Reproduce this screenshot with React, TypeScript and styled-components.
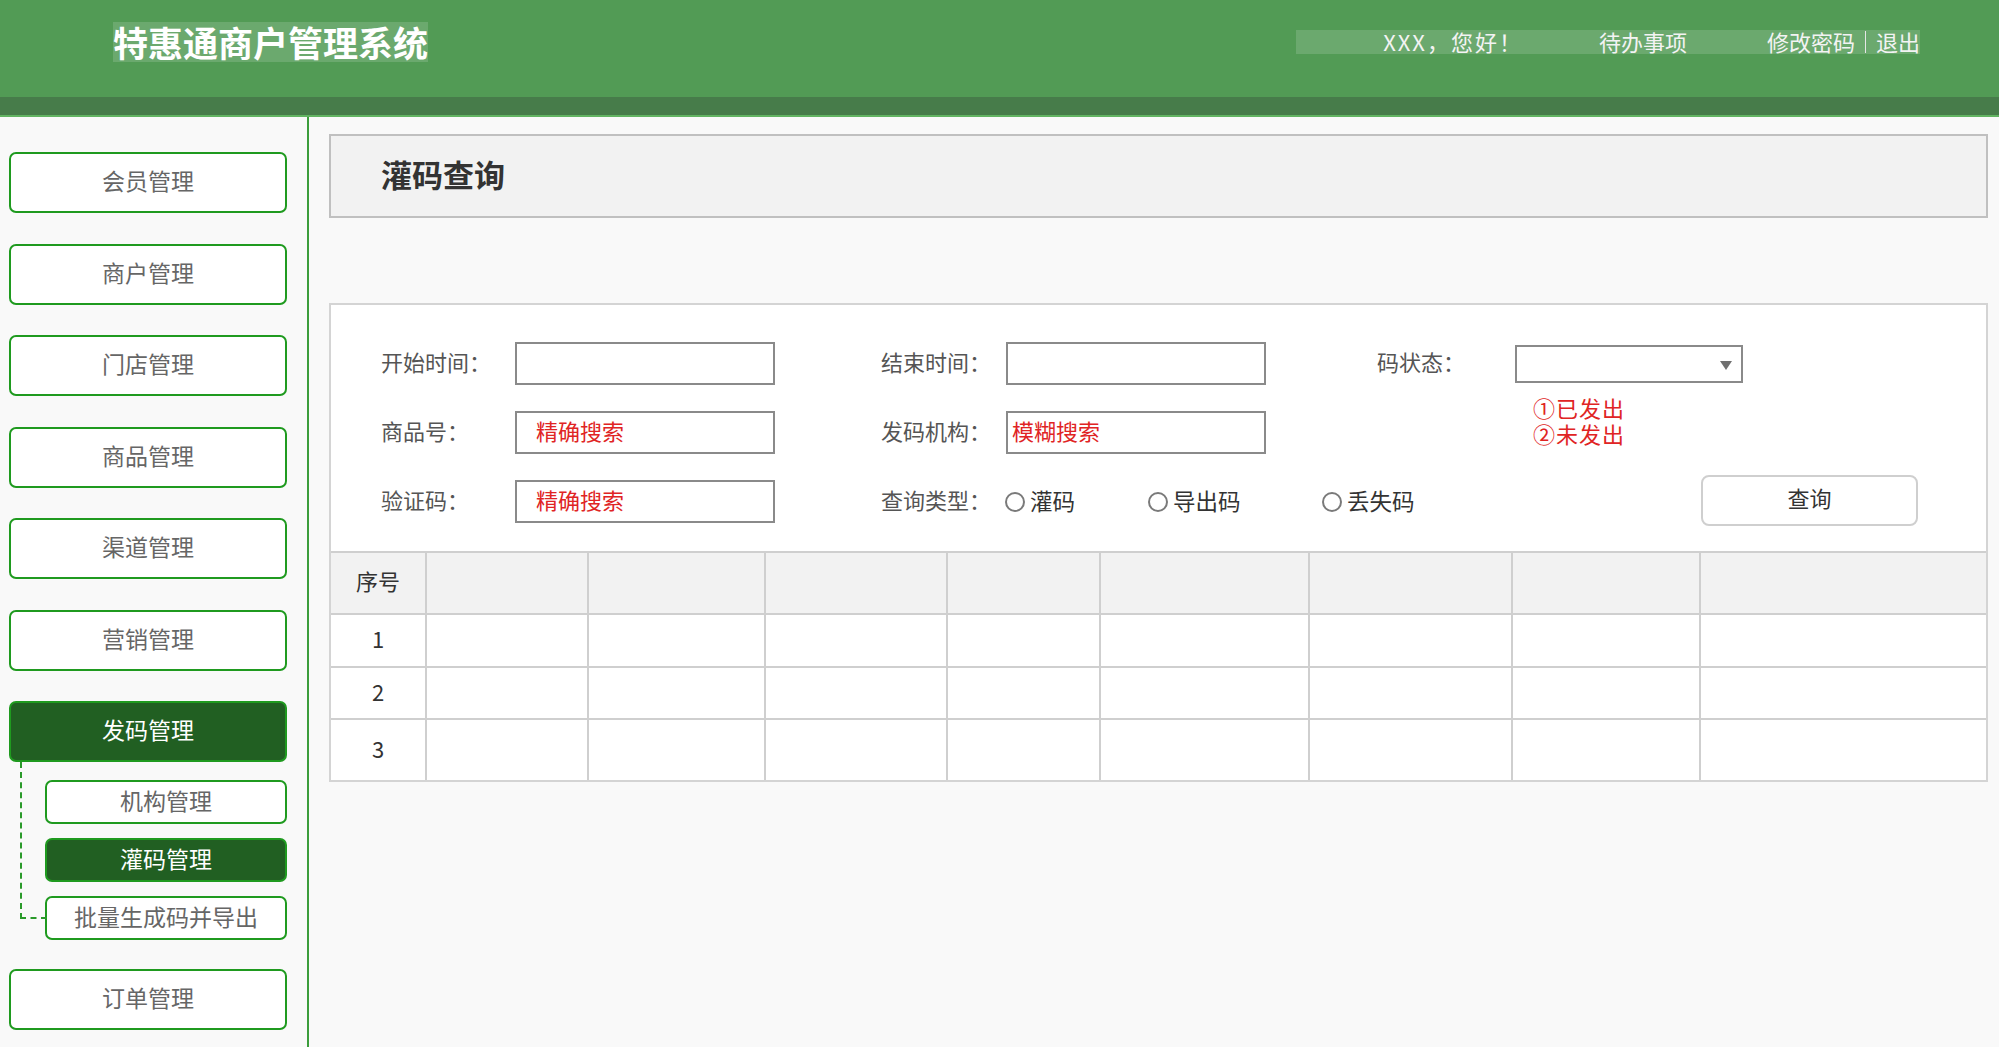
import React from "react";
import styled, { createGlobalStyle } from "styled-components";

const GlobalStyle = createGlobalStyle`
    html, body {
        margin: 0;
        padding: 0;
    }
    body {
        font-family: "Noto Sans CJK SC", "Noto Sans", sans-serif;
        background: #f9f9f9;
    }
    * {
        box-sizing: border-box;
    }
`;

const menu = ["会员管理", "商户管理", "门店管理", "商品管理", "渠道管理", "营销管理"];
const subMenu = [
    { label: "机构管理", active: false },
    { label: "灌码管理", active: true },
    { label: "批量生成码并导出", active: false },
];
const colWidths = [95, 162, 177, 182, 153, 209, 203, 188];
const rows = [
    { no: "1", height: 53 },
    { no: "2", height: 52 },
    { no: "3", height: 61 },
];

export default function App() {
    return (
        <Page>
            <GlobalStyle />
            <Header>
                <Title>特惠通商户管理系统</Title>
                <UserBar>
                    <Greeting>XXX，您好！</Greeting>
                    <UserLink $gap={76}>待办事项</UserLink>
                    <UserLink $gap={80}>修改密码</UserLink>
                    <Divider />
                    <span>退出</span>
                </UserBar>
            </Header>
            <Band />
            <Body>
                <Sidebar>
                    {menu.map((m) => (
                        <NavButton key={m}>{m}</NavButton>
                    ))}
                    <NavButton $active>发码管理</NavButton>
                    <SubGroup>
                        {subMenu.map((s) => (
                            <SubButton key={s.label} $active={s.active}>
                                {s.label}
                            </SubButton>
                        ))}
                    </SubGroup>
                    <NavButton>订单管理</NavButton>
                </Sidebar>
                <Main>
                    <TitlePanel>灌码查询</TitlePanel>
                    <FormPanel>
                        <FormGrid>
                            <Label>开始时间：</Label>
                            <Field readOnly value="" />
                            <Spacer />
                            <Label>结束时间：</Label>
                            <Field readOnly value="" />
                            <Spacer />
                            <Label>码状态：</Label>
                            <Select>
                                <Caret />
                            </Select>

                            <Label $row={2}>商品号：</Label>
                            <Field readOnly value="精确搜索" $row={2} />
                            <Label $row={2} $col={4}>发码机构：</Label>
                            <Field readOnly value="模糊搜索" $row={2} $col={5} $pad={4} />
                            <Note>
                                <div>①已发出</div>
                                <div>②未发出</div>
                            </Note>

                            <Label $row={3}>验证码：</Label>
                            <Field readOnly value="精确搜索" $row={3} />
                            <Label $row={3} $col={4}>查询类型：</Label>
                            <Radios>
                                <Radio $w={143}>
                                    <Dot />
                                    灌码
                                </Radio>
                                <Radio $w={174}>
                                    <Dot />
                                    导出码
                                </Radio>
                                <Radio>
                                    <Dot />
                                    丢失码
                                </Radio>
                            </Radios>
                            <QueryButton>查询</QueryButton>
                        </FormGrid>
                        <Table>
                            <colgroup>
                                {colWidths.map((w, i) => (
                                    <col key={i} style={{ width: w }} />
                                ))}
                                <col />
                            </colgroup>
                            <thead>
                                <tr>
                                    <Th>序号</Th>
                                    {colWidths.map((_, i) => (
                                        <Th key={i} />
                                    ))}
                                </tr>
                            </thead>
                            <tbody>
                                {rows.map((r) => (
                                    <tr key={r.no} style={{ height: r.height }}>
                                        <Td>{r.no}</Td>
                                        {colWidths.map((_, i) => (
                                            <Td key={i} />
                                        ))}
                                    </tr>
                                ))}
                            </tbody>
                        </Table>
                    </FormPanel>
                </Main>
            </Body>
        </Page>
    );
}

const Page = styled.div`
    min-height: 100vh;
    display: flex;
    flex-direction: column;
`;

const Header = styled.header`
    height: 97px;
    background: #529b55;
    display: flex;
    align-items: center;
    justify-content: space-between;
    padding: 0 79px 14px 113px;
`;

const Title = styled.h1`
    margin: 0;
    font-size: 35px;
    line-height: 40px;
    font-weight: bold;
    color: #fff;
    background: rgba(255, 255, 255, 0.15);
`;

const UserBar = styled.div`
    display: flex;
    align-items: center;
    height: 24px;
    padding: 0 0 2px 87px;
    background: rgba(255, 255, 255, 0.15);
    font-size: 22px;
    line-height: 24px;
    color: #f3f3f3;
`;

const Greeting = styled.span`
    letter-spacing: 2px;
`;

const UserLink = styled.span<{ $gap: number }>`
    margin-left: ${(p) => p.$gap}px;
`;

const Divider = styled.span`
    width: 0;
    height: 22px;
    border-left: 1px solid #e6e6e6;
    margin: 3px 10px 0;
`;

const Band = styled.div`
    height: 20px;
    background: #477c4a;
    border-bottom: 2px solid #62b462;
`;

const Body = styled.div`
    display: flex;
    flex: 1;
`;

const Sidebar = styled.nav`
    width: 309px;
    flex-shrink: 0;
    padding: 35px 0 0 9px;
    border-right: 2px solid #3c9d3c;
    background: #f9f9f9;
`;

const NavButton = styled.div<{ $active?: boolean }>`
    width: 278px;
    height: 61px;
    margin-bottom: 30.5px;
    display: flex;
    align-items: center;
    justify-content: center;
    padding-bottom: 5px;
    border: 2px solid #1f9a1f;
    border-radius: 7px;
    font-size: 23px;
    color: ${(p) => (p.$active ? "#fff" : "#666")};
    background: ${(p) => (p.$active ? "#215f22" : "#fff")};
`;

const SubGroup = styled.div`
    position: relative;
    display: flex;
    flex-direction: column;
    gap: 14px;
    margin: -12.5px 0 29px;
    padding-left: 36px;

    &::before {
        content: "";
        position: absolute;
        left: 11px;
        top: -18px;
        bottom: 21px;
        width: 25px;
        border-left: 2px dashed #2a9a2a;
        border-bottom: 2px dashed #2a9a2a;
    }
`;

const SubButton = styled.div<{ $active?: boolean }>`
    width: 242px;
    height: 44px;
    display: flex;
    align-items: center;
    justify-content: center;
    padding-bottom: 4px;
    border: 2px solid #1f9a1f;
    border-radius: 7px;
    font-size: 23px;
    color: ${(p) => (p.$active ? "#fff" : "#666")};
    background: ${(p) => (p.$active ? "#215f22" : "#fff")};
`;

const Main = styled.main`
    flex: 1;
    padding: 17px 11px 0 20px;
`;

const TitlePanel = styled.div`
    height: 84px;
    display: flex;
    align-items: center;
    padding: 0 0 6px 50px;
    background: #f2f2f2;
    border: 2px solid #c0c0c0;
    font-size: 31px;
    font-weight: bold;
    color: #333;
`;

const FormPanel = styled.section`
    margin-top: 85px;
    background: #fff;
    border: 2px solid #d4d4d4;
`;

const FormGrid = styled.div`
    display: grid;
    grid-template-columns: 134px 260px 106px 125px 260px 111px 138px 186px 217px;
    grid-template-rows: 43px 43px 43px;
    row-gap: 26px;
    padding: 37px 0 28px 50px;
`;

const Label = styled.div<{ $row?: number; $col?: number }>`
    grid-row: ${(p) => p.$row ?? "auto"};
    grid-column: ${(p) => p.$col ?? "auto"};
    align-self: center;
    margin-top: -5px;
    font-size: 22px;
    color: #555;
    white-space: nowrap;
`;

const Spacer = styled.div``;

const Field = styled.input<{ $row?: number; $col?: number; $pad?: number }>`
    grid-row: ${(p) => p.$row ?? "auto"};
    grid-column: ${(p) => p.$col ?? "auto"};
    width: 100%;
    height: 43px;
    margin: 0;
    padding: 0 0 6px ${(p) => p.$pad ?? 19}px;
    border: 2px solid #8a8a8a;
    background: #fff;
    font: 22px "Noto Sans CJK SC", "Noto Sans", sans-serif;
    color: #e02424;
    outline: none;
`;

const Select = styled.div`
    grid-column: 8 / span 2;
    align-self: center;
    position: relative;
    width: 228px;
    height: 38px;
    border: 2px solid #8a8a8a;
    background: #fff;
`;

const Caret = styled.span`
    position: absolute;
    right: 9px;
    top: 14px;
    width: 0;
    height: 0;
    border-left: 6px solid transparent;
    border-right: 6px solid transparent;
    border-top: 9px solid #707070;
`;

const Note = styled.div`
    grid-row: 2;
    grid-column: 8 / span 2;
    align-self: start;
    margin: -17px 0 0 18px;
    font-size: 22px;
    line-height: 26px;
    color: #e02424;
    letter-spacing: 1px;
`;

const Radios = styled.div`
    grid-row: 3;
    grid-column: 5 / span 4;
    display: flex;
    align-items: center;
    margin-top: -4px;
    font-size: 22.5px;
    color: #333;
`;

const Radio = styled.label<{ $w?: number }>`
    display: flex;
    align-items: center;
    width: ${(p) => (p.$w ? `${p.$w}px` : "auto")};
`;

const Dot = styled.span`
    flex: none;
    width: 20px;
    height: 20px;
    margin: 4px 5px 0 -1px;
    border: 2px solid #7a7a7a;
    border-radius: 50%;
`;

const QueryButton = styled.button`
    grid-row: 3;
    grid-column: 9;
    align-self: center;
    width: 217px;
    height: 51px;
    margin-top: -3px;
    padding-bottom: 7px;
    border: 2px solid #cfcfcf;
    border-radius: 8px;
    background: #fff;
    font: 22px "Noto Sans CJK SC", "Noto Sans", sans-serif;
    color: #333;
`;

const Table = styled.table`
    width: 100%;
    table-layout: fixed;
    border-collapse: collapse;

    tr > *:first-child {
        border-left: none;
    }
    tr > *:last-child {
        border-right: none;
    }
    tbody tr:last-child td {
        border-bottom: none;
    }
`;

const Th = styled.th`
    height: 62px;
    padding: 0 0 6px;
    border: 2px solid #cfcfcf;
    background: #f2f2f2;
    font-size: 22px;
    font-weight: normal;
    color: #333;
`;

const Td = styled.td`
    padding: 0 0 5px;
    border: 2px solid #cfcfcf;
    text-align: center;
    font-size: 22px;
    color: #333;
`;
